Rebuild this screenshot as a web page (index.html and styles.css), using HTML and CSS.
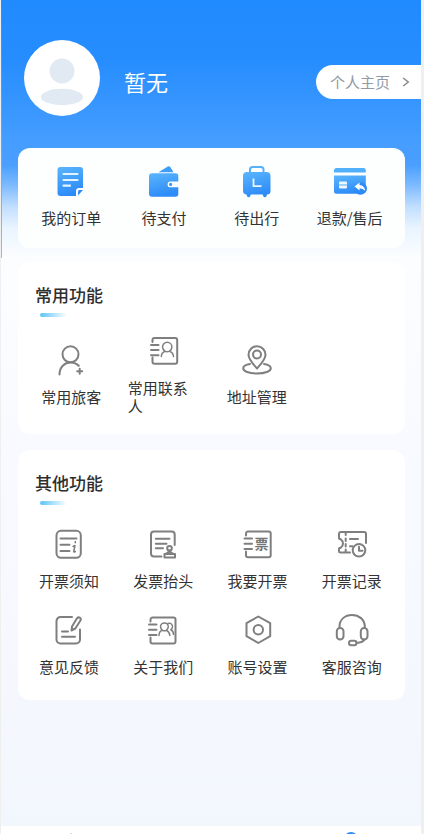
FILE: index.html
```html
<!DOCTYPE html>
<html lang="zh-CN">
<head>
<meta charset="utf-8">
<meta name="viewport" content="width=device-width, initial-scale=1">
<title>个人中心</title>
<link rel="stylesheet" href="styles.css">
</head>
<body>
<div class="app">
  <main class="content">
    <header class="profile">
      <svg class="avatar" viewBox="0 0 76 76" aria-hidden="true">
        <circle cx="38" cy="38" r="38" fill="#fff"/>
        <circle cx="38" cy="31" r="12.5" fill="#e1e9f3"/>
        <ellipse cx="38" cy="57" rx="21" ry="8.2" fill="#e1e9f3"/>
      </svg>
      <h1 class="name">暂无</h1>
      <a class="home-link" href="#home">个人主页
        <svg class="chevron" viewBox="0 0 8 10" aria-hidden="true"><path d="M1.2 1 6.3 5 1.2 9"/></svg>
      </a>
    </header>

    <nav class="card orders" aria-label="订单">
      <svg class="defs" aria-hidden="true">
        <defs>
          <linearGradient id="blue" x1="0" y1="0" x2="0.3" y2="1">
            <stop offset="0" stop-color="#5bb6fc"/>
            <stop offset="1" stop-color="#2d8bf8"/>
          </linearGradient>
        </defs>
      </svg>
      <a class="item" href="#orders">
        <svg class="icon" viewBox="0 0 32 32" aria-hidden="true">
          <path fill="url(#blue)" d="M5.5 2H25a3 3 0 0 1 3 3V23H24a3 3 0 0 0-3 3v5H5.500a3 3 0 0 1-3-3V5a3 3 0 0 1 3-3z"/>
          <path fill="#2d8bf8" d="M24.500 25H28L23 30.500V26.500a1.500 1.500 0 0 1 1.500-1.500z"/>
          <path fill="none" stroke="#e4f3ff" stroke-width="2.200" stroke-linecap="round" d="M8.500 9H22.500M8.500 15H22.500M8.500 20.700H15"/>
        </svg>
        <span class="label">我的订单</span>
      </a>
      <a class="item" href="#pay">
        <svg class="icon" viewBox="0 0 32 32" aria-hidden="true">
          <path fill="#3f9cf9" d="M10.500 7.300 19 1.900Q21 .6 22.500 2.300L25.500 7.300z"/>
          <path fill="url(#blue)" d="M4 8.300H27.500a2.800 2.800 0 0 1 2.800 2.800V16.500H22.500a2.900 2.900 0 0 0 0 5.800H30.300V29a2.800 2.800 0 0 1-2.800 2.800H4A3 3 0 0 1 1 28.800V11.300a3 3 0 0 1 3-3z"/>
          <circle cx="22.600" cy="19.400" r="1.600" fill="#389af8"/>
        </svg>
        <span class="label">待支付</span>
      </a>
      <a class="item" href="#trip">
        <svg class="icon" viewBox="0 0 32 32" aria-hidden="true">
          <path fill="none" stroke="#55b1fb" stroke-width="2" d="M9 8V4.500A2.500 2.500 0 0 1 11.500 2H20a2.500 2.500 0 0 1 2.500 2.500V8"/>
          <path fill="url(#blue)" d="M6 7H25.500a4 4 0 0 1 4 4V26a3.500 3.500 0 0 1-3.500 3.500L25.500 31a1.700 1.700 0 0 1-3.300 0L21.700 29.500H9.800L9.300 31A1.700 1.700 0 0 1 6 31L5.500 29.500A3.700 3.700 0 0 1 2 26V11a4 4 0 0 1 4-4z"/>
          <path fill="none" stroke="#eef7ff" stroke-width="1.800" d="M12.500 13.500V21.200H20.500"/>
        </svg>
        <span class="label">待出行</span>
      </a>
      <a class="item" href="#refund">
        <svg class="icon" viewBox="0 0 32 32" aria-hidden="true">
          <path fill="#52b0fb" d="M2.500 3H29.500a2.300 2.300 0 0 1 2.300 2.300V7.500H0V5.500A2.500 2.500 0 0 1 2.500 3z"/>
          <path fill="url(#blue)" d="M0 10.500H31.800V21A6.200 6.200 0 0 1 23 28.700H2.500A2.500 2.500 0 0 1 0 26.200z"/>
          <circle cx="27" cy="23.500" r="6" fill="#2d8bf8"/>
          <rect x="5" y="16.500" width="8" height="7" rx="1" fill="#edf7ff"/>
          <path stroke="#56abf9" d="M5 20H13"/>
          <path fill="#fff" d="M20.500 21.500 25.500 17.500V19.900Q30.500 20.500 31.300 25.800 28.800 23.300 25.500 23.200V25.500z"/>
        </svg>
        <span class="label">退款/售后</span>
      </a>
    </nav>

    <section class="card common" aria-labelledby="common-title">
      <h2 class="title" id="common-title">常用功能</h2>
      <div class="grid">
        <a class="item" href="#travellers">
          <svg class="icon line" viewBox="0 0 32 32" aria-hidden="true">
            <circle cx="15.500" cy="10.300" r="8"/>
            <path d="M4.500 30.500C4.500 23 9.500 18.500 15.500 18.500Q20.500 18.500 23.800 21.800M24.700 24.800V29.800M22.200 27.300H27.200"/>
          </svg>
          <span class="label">常用旅客</span>
        </a>
        <a class="item" href="#contacts">
          <svg class="icon line" viewBox="0 0 32 32" aria-hidden="true">
            <path d="M4.500 7V5A2 2 0 0 1 6.500 3H27.200a2 2 0 0 1 2 2V26.700a2 2 0 0 1-2 2H6.500a2 2 0 0 1-2-2V22.500M3 10H10.500M3 15H10.500M3 20.300H10.500"/>
            <path class="fine" d="M13.300 21.500Q13.500 17.500 17 16.200 14.500 14.300 14.500 12a4.700 4.700 0 0 1 9.400 0Q23.900 14.500 21.500 16.200 25.300 17.500 25.500 21.500M17 16.200Q19 17.500 21.500 16.200"/>
          </svg>
          <span class="label">常用联系人</span>
        </a>
        <a class="item" href="#address">
          <svg class="icon line" viewBox="0 0 32 32" aria-hidden="true">
            <path d="M16 24.500C12 20 7.500 15.500 7.500 10.800a8.500 8.500 0 0 1 17 0C24.500 15.500 20 20 16 24.500z"/>
            <circle cx="16" cy="10.500" r="4"/>
            <path d="M9 20C4.500 20.800 2.200 22.500 2.200 24.300 2.200 27.300 8 29.500 16 29.500S29.800 27.300 29.800 24.300C29.800 22.500 27.500 20.800 23 20"/>
          </svg>
          <span class="label">地址管理</span>
        </a>
      </div>
    </section>

    <section class="card other" aria-labelledby="other-title">
      <h2 class="title" id="other-title">其他功能</h2>
      <div class="grid">
        <a class="item" href="#invoice-notice">
          <svg class="icon line" viewBox="0 0 32 32" aria-hidden="true">
            <rect x="3.500" y="2.800" width="24.300" height="27" rx="4.500"/>
            <path d="M7.500 10.500H23.500M7.500 16.800H16.500M7.500 23H16.500"/>
            <path class="fine" d="M20 18.500 22 17.500 20.700 23.500Q20.700 24.500 22.300 23.500M22.300 13.500V14.800"/>
          </svg>
          <span class="label">开票须知</span>
        </a>
        <a class="item" href="#invoice-title">
          <svg class="icon line" viewBox="0 0 32 32" aria-hidden="true">
            <path d="M14.500 28.500H7A3 3 0 0 1 4 25.500V6.500A3 3 0 0 1 7 3.500H24.700a3 3 0 0 1 3 3V17M8.800 10.700H22.500M8.800 15.700H19.500M8.800 20.300H16"/>
            <circle cx="22.500" cy="20.200" r="2.300"/>
            <path d="M21.500 22.500V24.500L18.500 26H17.500V29.500H28V26H26.500L23.500 24.500V22.500M18.500 26H26.500"/>
          </svg>
          <span class="label">发票抬头</span>
        </a>
        <a class="item" href="#invoice-apply">
          <svg class="icon line" viewBox="0 0 32 32" aria-hidden="true">
            <path d="M4 7.500V5.500A2 2 0 0 1 6 3.500H26.700a2 2 0 0 1 2 2V27.300a2 2 0 0 1-2 2H6a2 2 0 0 1-2-2V23.500M2.500 10.500H10M2.500 15.800H10M2.500 21H10"/>
            <text class="glyph" x="12.500" y="21">票</text>
          </svg>
          <span class="label">我要开票</span>
        </a>
        <a class="item" href="#invoice-history">
          <svg class="icon line" viewBox="0 0 32 32" aria-hidden="true">
            <path d="M14 24.500H4.500A1.500 1.500 0 0 1 3 23V20.500L5 19.500Q7 18 7 15.500T5 11.500L3 10.500V6A2 2 0 0 1 5 4H28a2 2 0 0 1 2 2V15"/>
            <path d="M9.700 4.500V7M9.700 10.500V13M9.700 16V18.500M9.700 21.500V24M14 11H22M14 18.300H16.500"/>
            <circle cx="23" cy="22.300" r="6.300"/>
            <path d="M23 18.700V22.700H26.500"/>
          </svg>
          <span class="label">开票记录</span>
        </a>
        <a class="item" href="#feedback">
          <svg class="icon line" viewBox="0 0 32 32" aria-hidden="true">
            <path d="M19 3H7.500A4 4 0 0 0 3.500 7V25.500a4 4 0 0 0 4 4H23a4 4 0 0 0 4-4V15.500M9 17.500H15M9 22.700H22"/>
            <path d="M18.500 16.500 19 12.500 24 4.300Q25.500 2.700 27 3.800T27.300 6.700L22.300 14.500z"/>
          </svg>
          <span class="label">意见反馈</span>
        </a>
        <a class="item" href="#about">
          <svg class="icon line" viewBox="0 0 32 32" aria-hidden="true">
            <path d="M3.500 7.500V5.500A2 2 0 0 1 5.500 3.500H26.500a2 2 0 0 1 2 2V27.500a2 2 0 0 1-2 2H5.500a2 2 0 0 1-2-2V23.500M2 10.500H9.500M2 15.800H9.500M2 21H9.500"/>
            <path class="fine" d="M12 21.500Q12 17.300 15.500 16.300 13.500 14.800 13.500 12.800a3.900 3.900 0 0 1 7.800 0Q21.300 14.800 19.300 16.300 22.500 17.500 22.800 21.500M15.500 16.300Q17.500 17.300 19.300 16.300M21 9.500Q25 8.500 25.500 12.500 25.500 14.500 23.800 15.800 26.500 17 26.500 20.500"/>
          </svg>
          <span class="label">关于我们</span>
        </a>
        <a class="item" href="#settings">
          <svg class="icon line" viewBox="0 0 32 32" aria-hidden="true">
            <path d="M16.300 2.500 28.200 9.200V22.200L16.300 29 4.500 22.200V9.200z"/>
            <circle cx="16.300" cy="15.800" r="4.700"/>
          </svg>
          <span class="label">账号设置</span>
        </a>
        <a class="item" href="#service">
          <svg class="icon line" viewBox="0 0 32 32" aria-hidden="true">
            <path d="M3.500 14V12.500C3.500 5.500 9 1 16 1S28.800 5.500 28.800 12.500V14M28.500 25.500Q27 28.500 20.500 29"/>
            <rect x=".8" y="14" width="6.700" height="11.500" rx="3.300"/>
            <rect x="24.800" y="14" width="6.700" height="11.500" rx="3.300"/>
            <rect x="13" y="26.700" width="7.500" height="4.500" rx="2.200"/>
          </svg>
          <span class="label">客服咨询</span>
        </a>
      </div>
    </section>
  </main>

  <nav class="tabs" aria-label="主导航">
    <a class="tab" href="#index" aria-label="首页"><svg class="tab-icon" viewBox="0 0 24 24" aria-hidden="true"><path fill="#b9bec6" d="M12 1 22 10V22H2V10z"/></svg></a>
    <a class="tab current" href="#me" aria-label="我的" aria-current="page"><svg class="tab-icon" viewBox="0 0 24 24" aria-hidden="true"><circle cx="12" cy="7" r="7" fill="#2f8cf5"/><path fill="#2f8cf5" d="M1 24Q2 15 12 15T23 24z"/></svg></a>
  </nav>
</div>
</body>
</html>
```
FILE: styles.css
```css
* {
  box-sizing: border-box;
}

body {
  margin: 0;
  padding: 0 3px 0 1px;
  background: #efefef;
  color: #333;
  font-family: "Noto Sans CJK SC", sans-serif;
  font-size: 15px;
  line-height: 18px;
}

a {
  color: inherit;
  text-decoration: none;
}

h1,
h2 {
  margin: 0;
  font-weight: 400;
}

.app {
  height: 100vh;
  overflow: hidden;
  background:
    linear-gradient(#2a8cf8, #8fbdf2) 0 0 / 1px 258px no-repeat,
    linear-gradient(#208bfe 0, #268dfe 60px, #459dff 140px, #4a9fff 165px, #7dbaff 185px, #c2dfff 207px, #e9f4ff 228px, #fcfeff 258px) 0 0 / 100% 258px no-repeat,
    linear-gradient(#fcfdff 258px, #f8faff 450px, #f2f7fd 826px);
}

.content {
  min-height: calc(100vh - 8px);
  padding: 40px 16px 32px 17px;
}

.profile {
  display: flex;
  align-items: center;
  height: 76px;
  margin: 0 -16px 32px 6px;
}

.avatar {
  flex: none;
  width: 76px;
  height: 76px;
}

.name {
  margin: 6px auto 0 24px;
  color: #fff;
  font-size: 22px;
  line-height: 32px;
}

.home-link {
  display: flex;
  align-items: center;
  gap: 12px;
  height: 34px;
  margin-top: 8px;
  padding: 0 11px 0 14px;
  border-radius: 17px 0 0 17px;
  background: #fff;
  color: #919aa6;
}

.chevron {
  width: 8px;
  height: 10px;
  fill: none;
  stroke: #858585;
  stroke-width: 1.4;
}

.card {
  border-radius: 12px;
  background: #fff;
}

.orders {
  display: grid;
  grid-template-columns: repeat(4, 1fr);
  margin-bottom: 14px;
  padding: 17px 9px 21px 7px;
  background: #fdfffe;
}

.defs {
  position: absolute;
  width: 0;
  height: 0;
}

.common {
  margin-bottom: 16px;
  padding: 22px 9px 19px 7px;
}

.other {
  padding: 22px 6px 24px 4px;
}

.title {
  padding-left: 10px;
  color: #2e2e2e;
  font-size: 17px;
  font-weight: 500;
  line-height: 22px;
}

.other .title {
  padding-left: 13px;
}

.title::after {
  content: "";
  display: block;
  width: 27px;
  height: 4px;
  margin: 7px 0 0 5px;
  border-radius: 2px;
  background: linear-gradient(90deg, #5cc4fa, #fff);
}

.grid {
  display: grid;
  grid-template-columns: repeat(4, 1fr);
  align-items: center;
  row-gap: 24px;
  margin-top: 18px;
}

.other .grid {
  margin-top: 23px;
}

.item {
  display: flex;
  flex-direction: column;
  align-items: center;
  gap: 12px;
  padding: 0 10px;
}

.icon {
  width: 32px;
  height: 32px;
  overflow: visible;
}

.line {
  fill: none;
  stroke: #7f7f7f;
  stroke-width: 2;
  stroke-linecap: round;
  stroke-linejoin: round;
}

.fine {
  stroke-width: 1.5;
}

.glyph {
  fill: #757575;
  stroke: none;
  font-size: 14px;
  font-weight: 700;
}

.tabs {
  display: grid;
  grid-template-columns: repeat(3, 1fr);
  height: 56px;
  padding-top: 6px;
  background: #fff;
}

.tab {
  display: flex;
  justify-content: center;
}

.current {
  grid-column: 3;
}

.tab-icon {
  width: 24px;
  height: 24px;
}
```
